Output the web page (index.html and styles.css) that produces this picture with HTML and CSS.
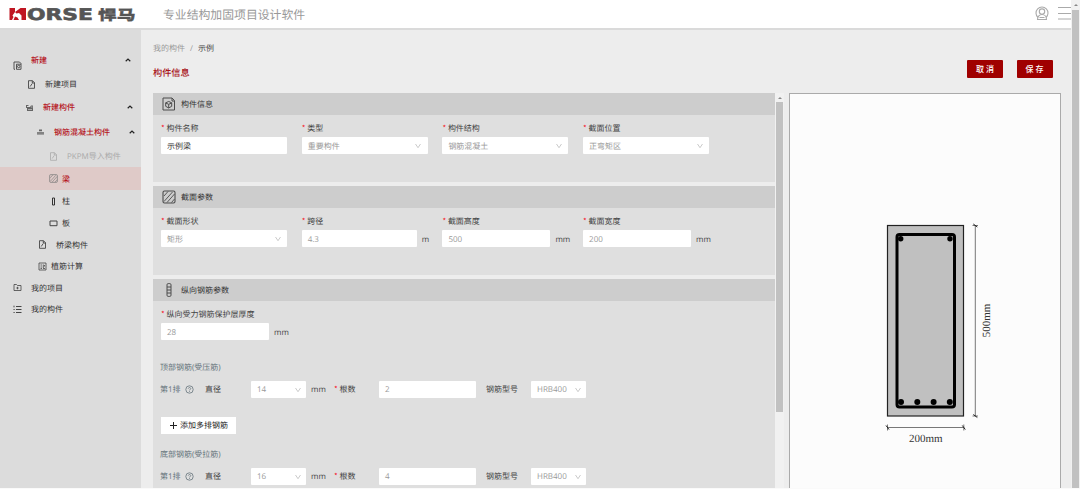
FILE: index.html
```html
<!DOCTYPE html>
<html lang="zh-CN">
<head>
<meta charset="utf-8">
<title>HORSE 悍马</title>
<link rel="stylesheet" href="styles.css">
</head>
<body>
<svg class="defs" width="0" height="0" aria-hidden="true">
  <symbol id="down" viewBox="0 0 8 8"><path d="M1.500 2l2.500 3.700L6.500 2" fill="none" stroke="#bdbdbd" stroke-width=".8"/></symbol>
  <symbol id="up" viewBox="0 0 8 8"><path d="M1.700 5.200L4 3l2.300 2.200" fill="none" stroke="#222" stroke-width="1.200"/></symbol>
  <symbol id="doc" viewBox="0 0 9 9"><path d="M1.500.7h4l2 2v5.600h-6zM5.300.8v2.200h2.200M3.200 6.500l2-3" fill="none" stroke="currentColor" stroke-width=".8"/></symbol>
  <symbol id="hatch" viewBox="0 0 14 14"><rect x="1" y="1" width="12" height="12" rx="1.500" fill="none" stroke="currentColor" stroke-width="1.100"/><path d="M2 6l4-4.500M2 11.500L10.500 2M5 12.500l7.500-8.500M9.500 12.500l3-3.500" fill="none" stroke="currentColor" stroke-width=".9"/></symbol>
  <symbol id="help" viewBox="0 0 9 9"><circle cx="4.500" cy="4.500" r="3.700" fill="none" stroke="#66747b" stroke-width=".8"/><path d="M3.300 3.700c0-1.600 2.500-1.500 2.400 0 0 .8-1.200.8-1.200 1.700M4.500 6v.8" fill="none" stroke="#66747b" stroke-width=".8"/></symbol>
</svg>
<div class="app">
  <div class="page">
    <header class="top">
      <svg class="logo" width="134" height="22" viewBox="0 -4 134 22">
        <path d="M.5 1H6v4L3.500 8.500 4.500 10 3 13H.5zM6 5l5.500-4H17v12h-4.500V8.500L10 6 7.500 6.500zM6 9.500l2.500 1L10 13H4.500z" fill="#c01622"/>
        <text x="18" y="13" textLength="66" lengthAdjust="spacingAndGlyphs" class="logo-en">ORSE</text>
        <text x="89" y="12.500" textLength="37.500" lengthAdjust="spacingAndGlyphs" class="logo-cn">悍马</text>
      </svg>
      <span class="slogan">专业结构加固项目设计软件</span>
      <svg class="user" width="14" height="15" viewBox="0 0 14 15" fill="none" stroke="#aaa" stroke-width="1.100"><path d="M3 11.500A6 6 0 1 1 11 11.500"/><circle cx="7" cy="5.600" r="2.700"/><path d="M2.500 13.500c0-3 2-5 4.500-5s4.500 2 4.500 5zM4.500 11.500h5"/></svg>
      <svg class="burger" width="13" height="13" viewBox="0 0 13 13" stroke="#aaa"><path d="M0 .5h13M0 6.500h13M0 12h13"/></svg>
    </header>
    <div class="shell">
      <nav class="side">
        <div class="item l0 h24 red"><svg class="low" width="9" height="9" viewBox="0 0 9 9" fill="none" stroke="#444" stroke-width=".9"><path d="M2 8.300H1V1h5.500L8 2.500v5.800H3.500V3.200H8"/><circle cx="5.700" cy="5.500" r="1.200"/></svg><span>新建</span><svg class="caret" width="8" height="8"><use href="#up"/></svg></div>
        <div class="item l1 h24"><svg width="9" height="9"><use href="#doc"/></svg><span>新建项目</span></div>
        <div class="item l2 h22 red"><svg width="9" height="9" viewBox="0 0 9 9"><path d="M1 2h2.500v1H2v1h3l1-1.500h2V8H2V5H1z" fill="#666"/><path d="M3 6.500h4M6 4h1.500" stroke="#ddd" stroke-width=".6"/></svg><span>新建构件</span><svg class="caret c2" width="8" height="8"><use href="#up"/></svg></div>
        <div class="item l3 h27 red"><svg width="9" height="9" viewBox="0 0 9 9"><path d="M3 2.500h3v1.700H3zM1 5h7v.7H1zM1 6.200h7v1.300H1z" fill="#666"/></svg><span>钢筋混凝土构件</span><svg class="caret c3" width="8" height="8"><use href="#up"/></svg></div>
        <div class="item l4 h22 muted"><svg width="9" height="9"><use href="#doc"/></svg><span>PKPM导入构件</span></div>
        <div class="item l5 h23 red active"><svg class="gray" width="9" height="9"><use href="#hatch"/></svg><span>梁</span></div>
        <div class="item l5 h22"><svg width="9" height="9" viewBox="0 0 9 9"><path d="M3.500 1h2v7h-2z" fill="none" stroke="#333"/></svg><span>柱</span></div>
        <div class="item l5 h22"><svg width="9" height="9" viewBox="0 0 9 9"><path d="M1 2h7v4.700H1z" fill="none" stroke="#444"/></svg><span>板</span></div>
        <div class="item l6 h21"><svg width="9" height="9"><use href="#doc"/></svg><span>桥梁构件</span></div>
        <div class="item l7 h22"><svg width="9" height="9" viewBox="0 0 9 9" fill="none" stroke="#444" stroke-width=".8"><path d="M1 1h7v7H1zM2.500 3h1.500M2.500 5h1.500M2.500 6.500h1.500M5.300 2.500V6M6.500 3v1.500M5 6.500h2"/></svg><span>植筋计算</span></div>
        <div class="item l0 h21"><svg width="9" height="9" viewBox="0 0 9 9" fill="none" stroke="#444" stroke-width=".8"><path d="M1 1.500h2.500l1 1H8v5H1zM4.500 3.800v2.500M3.300 5h2.400"/></svg><span>我的项目</span></div>
        <div class="item l0 h22"><svg width="9" height="9" viewBox="0 0 9 9" fill="none" stroke="#333" stroke-width=".9"><path d="M3 1.500h5.500M3 4.500h5.500M3 7.500h5.500M1 .7v1.600M.5 4.500h1.200M.5 7.500h1.200"/></svg><span>我的构件</span></div>
      </nav>
      <main class="main">
        <div class="crumb"><span>我的构件</span><i>/</i><b>示例</b></div>
        <div class="titlebar"><h1>构件信息</h1><button>取 消</button><button>保 存</button></div>
        <div class="work">
          <div class="forms">
            <section class="panel">
              <h2><svg width="14" height="14" viewBox="0 0 14 14" fill="none" stroke="#4c4c4c"><path d="M1 1h9l2.500 2.500V13H1zM10 1v3h2.500M6.700 4.500l3 1.300v3.500l-3 1.700-3-1.700V5.800zM3.700 6l3 1.300 3-1.300M6.700 7.300V11"/></svg><span>构件信息</span></h2>
              <div class="grid">
                <label class="field"><span class="req">构件名称</span><div class="line"><div class="box dark">示例梁</div></div></label>
                <label class="field"><span class="req">类型</span><div class="line"><div class="box">重要构件<svg width="8" height="8"><use href="#down"/></svg></div></div></label>
                <label class="field"><span class="req">构件结构</span><div class="line"><div class="box">钢筋混凝土<svg width="8" height="8"><use href="#down"/></svg></div></div></label>
                <label class="field"><span class="req">截面位置</span><div class="line"><div class="box">正弯矩区<svg width="8" height="8"><use href="#down"/></svg></div></div></label>
              </div>
            </section>
            <section class="panel">
              <h2><svg width="14" height="14" color="#4c4c4c"><use href="#hatch"/></svg><span>截面参数</span></h2>
              <div class="grid">
                <label class="field"><span class="req">截面形状</span><div class="line"><div class="box">矩形<svg width="8" height="8"><use href="#down"/></svg></div></div></label>
                <label class="field"><span class="req">跨径</span><div class="line"><div class="box w115">4.3</div>m</div></label>
                <label class="field"><span class="req">截面高度</span><div class="line"><div class="box w108">500</div>mm</div></label>
                <label class="field"><span class="req">截面宽度</span><div class="line"><div class="box w108">200</div>mm</div></label>
              </div>
            </section>
            <section class="panel last">
              <h2><svg width="14" height="14" viewBox="0 0 14 14" fill="none" stroke="#4c4c4c"><rect x="5" y=".6" width="4" height="12.800" rx="1.200"/><path d="M5 4h4M5 7h4M5 10h4"/></svg><span>纵向钢筋参数</span></h2>
              <div class="grid">
                <label class="field"><span class="req">纵向受力钢筋保护层厚度</span><div class="line"><div class="box w108">28</div>mm</div></label>
              </div>
              <div class="group first">顶部钢筋(受压筋)</div>
              <div class="bar"><span class="row-name">第1排</span><svg class="q" width="9" height="9"><use href="#help"/></svg><span class="dia">直径</span><div class="box w55">14<svg width="8" height="8"><use href="#down"/></svg></div><span class="mm">mm</span><span class="req count">根数</span><div class="box w97">2</div><span class="model">钢筋型号</span><div class="box w55">HRB400<svg width="8" height="8"><use href="#down"/></svg></div></div>
              <div class="add"><svg width="7" height="7" viewBox="0 0 7 7"><path d="M3.500 0v7M0 3.500h7" stroke="#222"/></svg>添加多排钢筋</div>
              <div class="group">底部钢筋(受拉筋)</div>
              <div class="bar"><span class="row-name">第1排</span><svg class="q" width="9" height="9"><use href="#help"/></svg><span class="dia">直径</span><div class="box w55">16<svg width="8" height="8"><use href="#down"/></svg></div><span class="mm">mm</span><span class="req count">根数</span><div class="box w97">4</div><span class="model">钢筋型号</span><div class="box w55">HRB400<svg width="8" height="8"><use href="#down"/></svg></div></div>
            </section>
          </div>
          <div class="scroll inner"><i></i><div class="thumb"></div></div>
          <div class="preview">
            <svg width="270" height="394" viewBox="790 94 270 394">
              <rect x="887.500" y="225.500" width="76" height="190.500" fill="#c0c0c0" stroke="#222" stroke-width="1.200"/>
              <rect x="897" y="234.500" width="57.500" height="172.500" rx="2.500" fill="none" stroke="#000" stroke-width="3"/>
              <g fill="#000"><circle cx="900.700" cy="238.700" r="2.700"/><circle cx="950" cy="238.700" r="2.700"/><circle cx="901" cy="402" r="3"/><circle cx="917.300" cy="402" r="3"/><circle cx="933.600" cy="402" r="3"/><circle cx="949.800" cy="402" r="3"/></g>
              <g stroke="#555" stroke-width=".8"><path d="M975.300 225v191M887 427.500h77"/><path d="M972.500 225.500h5.500M972.500 416h5.500M887.500 424.500v6M963.800 424.500v6" /><path d="M973.300 224l4 3M973.300 414.500l4 3M886 425.500l3 4M962.300 425.500l3 4" stroke="#222" stroke-width="1"/></g>
              <text x="925.700" y="442" text-anchor="middle" class="dim">200mm</text>
              <text transform="translate(990 320.500) rotate(-90)" text-anchor="middle" class="dim">500mm</text>
            </svg>
          </div>
        </div>
      </main>
    </div>
  </div>
  <div class="scroll outer"><i></i><div class="thumb"></div></div>
</div>
</body>
</html>
```
FILE: styles.css
```css
* { box-sizing: border-box; }
body { margin: 0; width: 1080px; height: 489px; overflow: hidden; background: #fafafa; color: #333; font: 8px/12px "Open Sans", "Noto Sans CJK SC", sans-serif; text-rendering: geometricPrecision; }
svg { display: block; flex: none; }
.defs { position: absolute; }
.app { display: flex; height: 488px; }
.page { width: 1071px; display: flex; flex-direction: column; }

.top { height: 30px; flex: none; display: flex; align-items: flex-start; background: #fff; border-bottom: 2px solid #dadada; padding: 7px 0 0 9px; }
.logo { margin-top: -4px; }
.logo-en { font: bold 16px "DejaVu Sans", sans-serif; fill: #555; stroke: #555; stroke-width: .6px; }
.logo-cn { font: 900 14px/1 "Noto Sans CJK SC", sans-serif; fill: #555; stroke: #555; stroke-width: .3px; }
.slogan { margin: 1px 0 0 20px; font-size: 11.85px; line-height: 15px; color: #999; white-space: nowrap; }
.user { margin: -1px 0 0 auto; }
.burger { margin: 0 0 0 9px; }

.shell { display: flex; flex: 1; min-height: 0; }
.side { width: 141px; flex: none; background: #dcdcdc; padding-top: 18px; }
.item { display: flex; align-items: center; white-space: nowrap; color: #333; }
.item span { padding-top: 2px; }
.item.red { color: #b5121b; font-weight: 500; }
.item.muted { color: #aaa; }
.item.active { background: #dfcac8; }
.gray { color: #777; }
.item .low { margin-top: 11px; }
.h21 { height: 21px; } .h22 { height: 22px; } .h23 { height: 23px; } .h24 { height: 24px; } .h27 { height: 27px; }
.l0 { padding-left: 13px; gap: 9px; }
.l1 { padding-left: 27px; gap: 9px; }
.l2 { padding-left: 25px; gap: 9px; }
.l3 { padding-left: 36px; gap: 9px; }
.l4 { padding-left: 49px; gap: 9px; }
.l5 { padding-left: 49px; gap: 4px; }
.l6 { padding-left: 38px; gap: 9px; }
.l7 { padding-left: 38px; gap: 4px; }
.caret { margin: 0 9px 0 auto; }
.c2 { margin-right: 7px; }
.c3 { margin-right: 5px; }

.main { flex: 1; min-width: 0; background: #ededed; padding: 13px 9px 0 12px; display: flex; flex-direction: column; }
.crumb { height: 12px; display: flex; gap: 5px; color: #999; }
.crumb i { font-style: normal; }
.crumb b { font-weight: 400; color: #444; }
.titlebar { height: 37px; padding-top: 5px; display: flex; align-items: flex-start; }
h1 { margin: 6px auto 0 0; font-size: 9.2px; line-height: 14px; font-weight: 500; color: #a8121a; }
button { width: 36px; height: 18px; padding: 0; border: 0; border-radius: 1px; background: #a00000; color: #fff; font: 500 8px/18px "Open Sans", "Noto Sans CJK SC", sans-serif; margin-right: 13.500px; }
button:last-child { margin-right: 9.500px; }

.work { flex: 1; display: flex; min-height: 0; padding-top: 1px; }
.forms { width: 622px; display: flex; flex-direction: column; gap: 4.500px; }
.panel { height: 88.500px; background: #dfdfdf; }
.panel.last { height: auto; flex: 1; }
h2 { margin: 0; height: 22px; background: #cdcdcd; display: flex; align-items: center; gap: 5px; padding-left: 9px; font-size: 8px; font-weight: 400; color: #333; }
h2 span { padding-top: 2px; }
.grid { display: grid; grid-template-columns: repeat(4, 140.700px); padding: 7.500px 0 0 8px; }
.field { display: block; white-space: nowrap; color: #444; }
.req { display: block; line-height: 12px; }
.req::before { content: "*"; color: #f5222d; display: inline-block; width: 5.500px; font-family: "Noto Sans CJK SC", sans-serif; line-height: 1; }
.line { display: flex; align-items: flex-end; gap: 5px; margin-top: 2.500px; line-height: 15px; }
.box { width: 126px; height: 17px; background: #fff; border-radius: 1px; color: #999; padding: 0 6px; display: flex; align-items: center; justify-content: space-between; }
.line .box { padding-top: 2px; }
.line .box svg { margin-top: -2px; }
.box.dark { color: #333; }
.box svg { margin-right: -.5px; }
.w115 { width: 115px; } .w108 { width: 108px; } .w97 { width: 97px; }
.w55 { width: 55px; padding-right: 5px; }
.group { margin: 15px 0 0 7px; height: 12px; color: #66747b; }
.group.first { margin-top: 22px; }
.bar { display: flex; align-items: center; height: 17px; margin: 7px 0 0 7px; color: #444; white-space: nowrap; }
.row-name { width: 24px; color: #66747b; }
.q { margin-left: .5px; }
.dia { width: 46px; margin-left: 11.500px; }
.mm { width: 23px; margin-left: 5px; }
.count { width: 45px; }
.model { width: 45px; margin-left: 10px; }
.add { width: 75px; height: 17px; margin: 19px 0 0 8px; background: #fff; display: flex; align-items: center; gap: 3px; padding-left: 9px; color: #222; white-space: nowrap; }

.scroll { width: 9px; flex: none; background: #f1f1f1; display: flex; flex-direction: column; align-items: center; }
.scroll i { border: 2px solid transparent; border-top: 0; border-bottom: 2px solid #888; margin-top: 4px; }
.scroll .thumb { width: 7px; background: #c1c1c1; }
.inner .thumb { height: 310px; margin-top: 3px; }
.outer .thumb { height: 480px; margin-top: 4px; }
.preview { width: 272px; flex: none; margin-left: 5px; background: #fcfcfc; border: 1px solid #aaa; border-bottom: 0; }
.dim { font: 11px "Liberation Serif", serif; fill: #333; }
```
